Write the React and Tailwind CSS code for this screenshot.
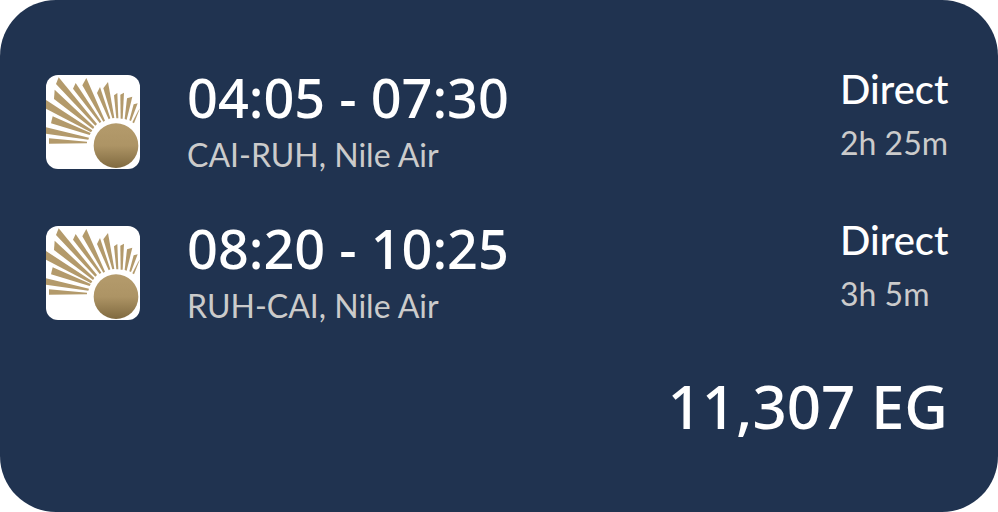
const rays = [
  "27,205 141,215 141,220 27,221",
  "18,172 147,203 145,209 18,191",
  "38,139 152,189 149,195 33,160",
  "18,90 157,181 153,187 18,116",
  "44,59 163,171 159,177 42,87",
  "56,22 171,162 166,167 48,42",
  "107,39 184,155 179,159 99,56",
  "139,24 195,152 190,155 127,46",
  "180,51 211,145 206,148 171,69",
  "204,36 223,144 217,145 190,55",
  "232,69 235,145 229,145 222,76",
  "252,68 248,146 242,146 241,74",
  "277,80 260,149 254,147 261,85",
  "293,100 273,153 268,151 281,103",
  "300,115 282,160 277,157 294,124",
];

const flights = [
  { id: "outbound", time: "04:05 - 07:30", route: "CAI-RUH, Nile Air", stops: "Direct", duration: "2h 25m" },
  { id: "return", time: "08:20 - 10:25", route: "RUH-CAI, Nile Air", stops: "Direct", duration: "3h 5m" },
];

function AirlineLogo({ id }) {
  const fill = `sun-${id}`;
  return (
    <svg
      role="img"
      aria-label="Nile Air"
      viewBox="18 15 282 282"
      className="size-[94px] shrink-0 rounded-xl bg-white"
    >
      <defs>
        <linearGradient id={fill} x1="0" y1="0" x2="0" y2="1">
          <stop offset="0" stopColor="#b49b6c" />
          <stop offset="0.5" stopColor="#ad9465" />
          <stop offset="1" stopColor="#806a40" />
        </linearGradient>
      </defs>
      {rays.map((points) => (
        <polygon key={points} points={points} fill="#b39a6b" />
      ))}
      <circle cx="228" cy="227" r="67" fill={`url(#${fill})`} />
    </svg>
  );
}

function FlightRow({ flight }) {
  return (
    <li className="flex items-start">
      <AirlineLogo id={flight.id} />
      <div className="ml-[47px] flex-1">
        <p className="font-['Noto_Sans',sans-serif] text-[54px] leading-[44px] font-medium">{flight.time}</p>
        <p className="mt-4 text-[32px] leading-[40px] text-[#cbcbcb]">{flight.route}</p>
      </div>
      <div className="w-[108px] whitespace-nowrap">
        <p className="text-[40px] leading-[28px] font-medium">{flight.stops}</p>
        <p className="mt-5 text-[32px] leading-[40px] text-[#cbcbcb]">{flight.duration}</p>
      </div>
    </li>
  );
}

export default function App() {
  return (
    <main className="min-h-screen rounded-[56px] bg-[#203350] pr-[50px] pl-[46px] pt-[75px] pb-16 font-['Lato','Open_Sans',sans-serif] text-white">
      <ul className="flex flex-col gap-[51px]">
        {flights.map((flight) => (
          <FlightRow key={flight.id} flight={flight} />
        ))}
      </ul>
      <p className="mt-12 text-right font-['Noto_Sans',sans-serif] text-[60px] leading-[64px] font-medium">11,307 EG</p>
    </main>
  );
}
